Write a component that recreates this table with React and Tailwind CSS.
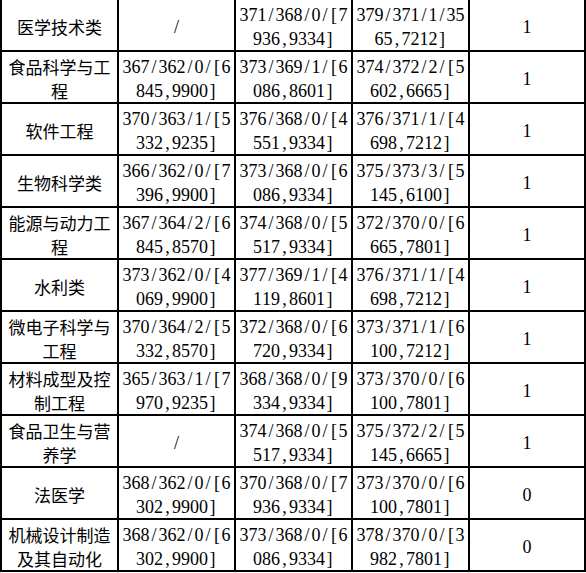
const rows = [
    ['医学技术类', '/', '371/368/0/[7|936,9334]', '379/371/1/35|65,7212]', '1'],
    ['食品科学与工|程', '367/362/0/[6|845,9900]', '373/369/1/[6|086,8601]', '374/372/2/[5|602,6665]', '1'],
    ['软件工程', '370/363/1/[5|332,9235]', '376/368/0/[4|551,9334]', '376/371/1/[4|698,7212]', '1'],
    ['生物科学类', '366/362/0/[7|396,9900]', '373/368/0/[6|086,9334]', '375/373/3/[5|145,6100]', '1'],
    ['能源与动力工|程', '367/364/2/[6|845,8570]', '374/368/0/[5|517,9334]', '372/370/0/[6|665,7801]', '1'],
    ['水利类', '373/362/0/[4|069,9900]', '377/369/1/[4|119,8601]', '376/371/1/[4|698,7212]', '1'],
    ['微电子科学与|工程', '370/364/2/[5|332,8570]', '372/368/0/[6|720,9334]', '373/371/1/[6|100,7212]', '1'],
    ['材料成型及控|制工程', '365/363/1/[7|970,9235]', '368/368/0/[9|334,9334]', '373/370/0/[6|100,7801]', '1'],
    ['食品卫生与营|养学', '/', '374/368/0/[5|517,9334]', '375/372/2/[5|145,6665]', '1'],
    ['法医学', '368/362/0/[6|302,9900]', '370/368/0/[7|936,9334]', '373/370/0/[6|100,7801]', '0'],
    ['机械设计制造|及其自动化', '368/362/0/[6|302,9900]', '373/368/0/[6|086,9334]', '378/370/0/[3|982,7801]', '0']
];

// SimSun-style half-width: every ascii char gets the same 9px advance
function MonoLine({ text }) {
    return (
        <div className="flex justify-center font-[family-name:'Liberation_Serif',serif]">
            {text.split('').map((ch, i) => (
                <span key={i} className="inline-block w-[9px] text-center">
                    {ch}
                </span>
            ))}
        </div>
    );
}

function Cell({ value, cjk }) {
    const lines = value.split('|');
    return (
        <div className="flex h-[50px] flex-col items-center justify-center bg-white pt-[3px] text-[18px] leading-[24px] text-black">
            {lines.map((line, i) =>
                cjk ? (
                    <div key={i} className="font-[family-name:'Noto_Sans_CJK_SC',sans-serif] text-[17px]">
                        {line}
                    </div>
                ) : (
                    <MonoLine key={i} text={line} />
                )
            )}
        </div>
    );
}

export default function App() {
    return (
        <div className="h-[573px] w-[586px] overflow-hidden bg-white">
            <div className="-mt-[2px] grid grid-cols-[115px_115px_115px_115px_114px] gap-[2px] bg-black p-[2px]">
                {rows.map((row, r) =>
                    row.map((value, c) => <Cell key={`${r}-${c}`} value={value} cjk={c === 0} />)
                )}
            </div>
        </div>
    );
}
